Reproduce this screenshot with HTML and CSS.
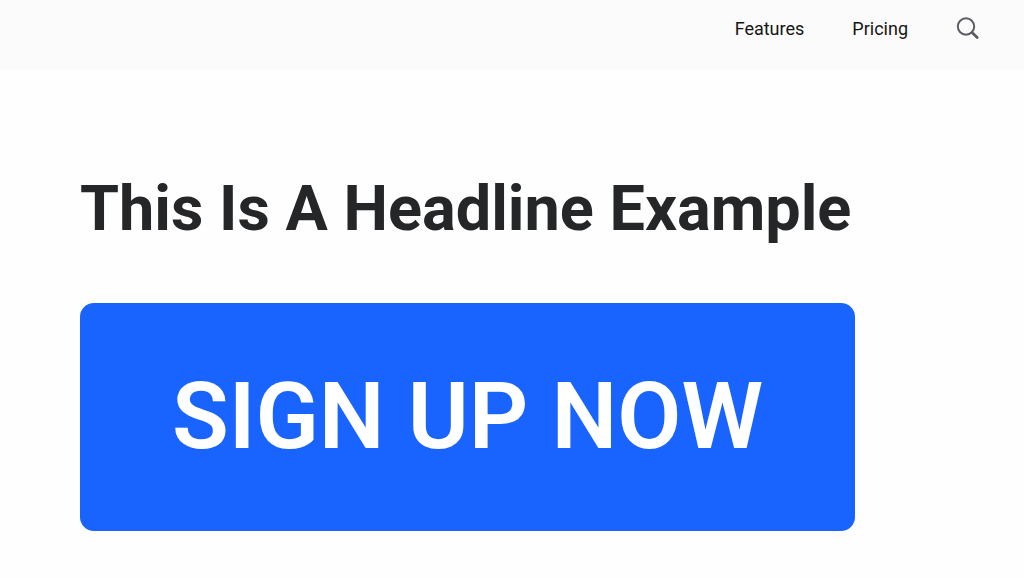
FILE: index.html
```
<!DOCTYPE html>
<html lang="en">
<head>
    <meta charset="UTF-8">
    <meta name="viewport" content="width=device-width, initial-scale=1.0">
    <title>Headline Example</title>
    <link rel="stylesheet" href="styles.css">
</head>
<body>

    <header class="navbar">
        <nav class="nav-links">
            <a href="#features">Features</a>
            <a href="#pricing">Pricing</a>
        </nav>
        <button class="search" type="button" aria-label="Search">
            <svg width="24" height="24" viewBox="0 0 24 24" fill="none" stroke="currentColor" stroke-linecap="round">
                <circle cx="10" cy="9.5" r="8.2" stroke-width="2"/>
                <path d="M16 15.6L21.2 20.6" stroke-width="2.8"/>
            </svg>
        </button>
    </header>

    <main class="hero">
        <h1>This Is A Headline Example</h1>
        <button class="signup" type="button">SIGN UP NOW</button>
    </main>

</body>
</html>
```
FILE: styles.css
```
* {
    box-sizing: border-box;
}
body {
    margin: 0;
    font-family: Roboto, Arial, sans-serif;
    background-color: #fefefe;
    color: #252628;
}
.navbar {
    display: flex;
    justify-content: flex-end;
    align-items: center;
    gap: 48px;
    padding: 16px 44px 28px;
    background-color: #fbfbfb;
}
.nav-links {
    display: flex;
    gap: 48px;
}
.nav-links a {
    font-size: 18px;
    line-height: 26px;
    color: #151515;
    text-decoration: none;
}
.search {
    display: flex;
    padding: 0;
    border: none;
    background: none;
    color: #5b5d63;
    cursor: pointer;
}
.hero {
    padding: 97px 169px 44px 80px;
}
h1 {
    margin: 0 0 52px;
    font-size: 63px;
    line-height: 84px;
    font-weight: 700;
    white-space: nowrap;
}
.signup {
    display: block;
    width: 100%;
    padding: 58px 24px;
    border: none;
    border-radius: 14px;
    background-color: #1963ff;
    color: white;
    font-family: inherit;
    font-size: 93px;
    line-height: 112px;
    font-weight: 600;
    white-space: nowrap;
    cursor: pointer;
}
.signup:hover {
    background-color: #0f54e0;
}
```
